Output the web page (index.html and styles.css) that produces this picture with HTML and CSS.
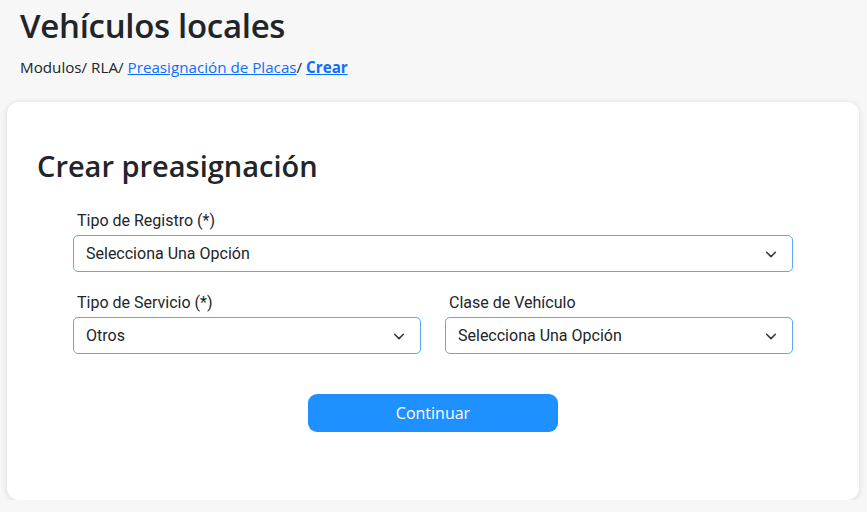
FILE: index.html
```html
<!DOCTYPE html>
<html lang="es">
<head>
<meta charset="utf-8">
<link rel="stylesheet" href="styles.css">
</head>
<body>
<header class="page-head">
  <h1 class="title">Vehículos locales</h1>
  <nav class="crumbs">Modulos/ RLA/ <a href="#">Preasignación de Placas</a>/ <a href="#" class="current">Crear</a></nav>
</header>
<main class="card">
  <h2 class="card-title">Crear preasignación</h2>
  <form class="form">
    <div class="field full">
      <label>Tipo de Registro (*)</label>
      <div class="select"><span>Selecciona Una Opción</span><svg viewBox="0 0 16 16" width="14" height="14"><path d="M3 6l5 5 5-5" fill="none" stroke="#343a40" stroke-width="1.8" stroke-linecap="round" stroke-linejoin="round"/></svg></div>
    </div>
    <div class="row">
      <div class="field">
        <label>Tipo de Servicio (*)</label>
        <div class="select"><span>Otros</span><svg viewBox="0 0 16 16" width="14" height="14"><path d="M3 6l5 5 5-5" fill="none" stroke="#343a40" stroke-width="1.8" stroke-linecap="round" stroke-linejoin="round"/></svg></div>
      </div>
      <div class="field">
        <label>Clase de Vehículo</label>
        <div class="select"><span>Selecciona Una Opción</span><svg viewBox="0 0 16 16" width="14" height="14"><path d="M3 6l5 5 5-5" fill="none" stroke="#343a40" stroke-width="1.8" stroke-linecap="round" stroke-linejoin="round"/></svg></div>
      </div>
    </div>
    <div class="actions"><button type="button" class="btn">Continuar</button></div>
  </form>
</main>
</body>
</html>
```
FILE: styles.css
```css
* { box-sizing: border-box; }
html, body { margin: 0; }
body {
  background: #f7f7f7;
  color: #212529;
  font-family: "Open Sans", "Noto Sans", sans-serif;
  padding: 0 8px 0 7px;
}
.page-head { padding: 6px 0 0 13px; height: 102px; }
.title {
  margin: 0;
  font-size: 33px;
  font-weight: 600;
  line-height: 40px;
  letter-spacing: -0.3px;
}
.crumbs { margin-top: 11px; font-size: 15.2px; line-height: 20px; }
.crumbs a { color: #0d6efd; }
.crumbs a.current { font-weight: 700; }
.card {
  background: #fff;
  border-radius: 12px;
  box-shadow: 0 1px 6px rgba(0,0,0,0.13);
  height: 398px;
  padding: 44px 30px 0;
}
.card-title {
  margin: 0;
  font-size: 29px;
  font-weight: 600;
  line-height: 40px;
}
.form { width: 720px; margin: 25px auto 0; font-family: Roboto, sans-serif; }
.field { display: flex; flex-direction: column; }
.field label { font-size: 16px; line-height: 20px; padding-left: 4px; margin-bottom: 4px; }
.row { display: grid; grid-template-columns: 1fr 1fr; gap: 24px; margin-top: 21px; }
.select {
  height: 37px;
  border: 1px solid #5aa8f8;
  border-radius: 5px;
  display: flex;
  align-items: center;
  justify-content: space-between;
  padding: 0 14px 0 12px;
  font-size: 16px;
}
.actions { display: flex; justify-content: center; margin-top: 40px; }
.btn {
  width: 250px;
  height: 38px;
  border: 0;
  border-radius: 9px;
  background: #1e90ff;
  color: #fff;
  font-family: "Open Sans", sans-serif;
  font-size: 16px;
}
```
